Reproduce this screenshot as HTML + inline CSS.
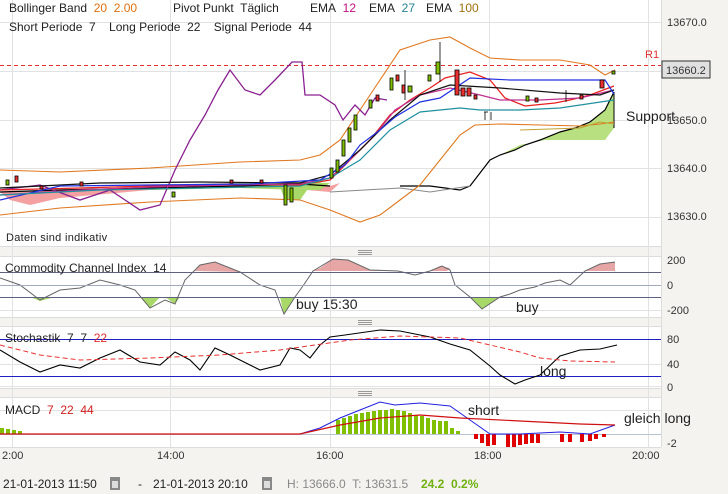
<!DOCTYPE html>
<html><head><meta charset="utf-8"><style>
body{margin:0;width:728px;height:494px;overflow:hidden;background:#f4f3ef;font-family:"Liberation Sans",sans-serif}
svg{position:absolute;left:0;top:0}
</style></head><body>
<svg width="728" height="494" viewBox="0 0 728 494" font-family="Liberation Sans, sans-serif">
<rect width="728" height="494" fill="#f4f3ef"/>
<!-- panels -->
<rect x="0" y="0" width="661" height="246" fill="#fff"/>
<rect x="0" y="256" width="661" height="61" fill="#fff"/>
<rect x="0" y="326" width="661" height="62" fill="#fff"/>
<rect x="0" y="397" width="661" height="50" fill="#fff"/>
<g stroke="#dcdcdc" stroke-width="1">
<line x1="0" y1="246.5" x2="661" y2="246.5"/><line x1="0" y1="256.5" x2="661" y2="256.5"/>
<line x1="0" y1="317.5" x2="661" y2="317.5"/><line x1="0" y1="326.5" x2="661" y2="326.5"/>
<line x1="0" y1="388.5" x2="661" y2="388.5"/><line x1="0" y1="397.5" x2="661" y2="397.5"/>
<line x1="0" y1="447.5" x2="661" y2="447.5"/>
<line x1="661.5" y1="0" x2="661.5" y2="447"/>
</g>
<!-- grips -->
<g stroke="#999" stroke-width="1">
<line x1="358" y1="250.5" x2="372" y2="250.5"/><line x1="358" y1="252.5" x2="372" y2="252.5"/><line x1="358" y1="254.5" x2="372" y2="254.5"/>
<line x1="358" y1="320.5" x2="372" y2="320.5"/><line x1="358" y1="322.5" x2="372" y2="322.5"/><line x1="358" y1="324.5" x2="372" y2="324.5"/>
<line x1="358" y1="391.5" x2="372" y2="391.5"/><line x1="358" y1="393.5" x2="372" y2="393.5"/><line x1="358" y1="395.5" x2="372" y2="395.5"/>
</g>
<!-- grids -->
<g stroke="#e2e2e2" stroke-width="1">
<line x1="0" y1="22.5" x2="661" y2="22.5"/><line x1="0" y1="71.5" x2="661" y2="71.5"/><line x1="0" y1="120.5" x2="661" y2="120.5"/><line x1="0" y1="168.5" x2="661" y2="168.5"/><line x1="0" y1="217.5" x2="661" y2="217.5"/>
<line x1="12.5" y1="0" x2="12.5" y2="447"/><line x1="170.5" y1="0" x2="170.5" y2="447"/><line x1="330.5" y1="0" x2="330.5" y2="447"/><line x1="489.5" y1="0" x2="489.5" y2="447"/><line x1="648.5" y1="0" x2="648.5" y2="447"/>
<line x1="0" y1="310.5" x2="661" y2="310.5"/><line x1="0" y1="364.5" x2="661" y2="364.5"/><line x1="0" y1="386.5" x2="661" y2="386.5"/><line x1="0" y1="410.5" x2="661" y2="410.5"/><line x1="0" y1="434.5" x2="661" y2="434.5" stroke="#b8c4d0"/>
</g>
<!-- R1 -->
<line x1="0" y1="65.5" x2="661" y2="65.5" stroke="#e03030" stroke-dasharray="4,3"/>
<text x="645" y="58" font-size="11" fill="#e03030">R1</text>
<!-- cloud areas -->
<path d="M0,192 L60,190 L150,188 L240,186 L300,184 L330,186 L340,183 L330,192 L260,186 L150,190 L60,198 L30,205 L10,200 Z" fill="#f4a0a0"/>
<path d="M150,185 L240,183 L300,182 L330,183 L320,190 L300,190 L240,188 L150,190 Z" fill="#a8d868"/>
<path d="M280,187 L300,188 L310,186 L300,200 L285,200 Z" fill="#a8d868"/>
<path d="M470,186 L490,160 L500,155 L515,150 L525,145 L540,140 L560,132 L575,128 L590,122 L605,110 L614,92 L614,128 L605,140 L545,140 L520,145 L490,160 Z" fill="#b8e080"/>
<path d="M0,192 L60,190 L150,188 L240,186 L300,184 L330,186 M400,186 L430,186 L460,190 L470,186 L490,160 L500,155 L515,150 L525,145 L540,140 L560,132 L575,128 L590,122 L605,110 L614,92" fill="none" stroke="#000" stroke-width="1.2"/>
<path d="M470,186 L430,192 L400,188 L330,192" fill="none" stroke="#888" stroke-width="1"/>
<line x1="614" y1="92" x2="614" y2="128" stroke="#000"/>
<!-- bollinger -->
<path d="M0,170 L60,172 L150,168 L240,162 L300,160 L320,155 L340,140 L360,110 L380,80 L400,50 L430,40 L450,37 L470,48 L490,58 L520,60 L560,60 L590,65 L605,75 L615,70" fill="none" stroke="#e07820" stroke-width="1.1"/>
<path d="M0,215 L60,208 L150,202 L240,198 L300,200 L330,210 L360,222 L380,215 L400,200 L420,185 L440,160 L460,135 L475,125 L500,124 L540,125 L580,126 L600,124 L614,122" fill="none" stroke="#e07820" stroke-width="1.1"/>
<path d="M520,130 L580,128 L600,122 L614,124" fill="none" stroke="#c0a030" stroke-width="1"/>
<!-- purple -->
<path d="M0,190 L40,185 L80,200 L110,190 L140,210 L160,205 L175,170 L190,140 L205,115 L218,90 L230,70 L245,90 L260,95 L275,80 L292,62 L302,62 L305,95 L320,95 L335,105 L343,120 L355,105 L365,115 L375,98 L387,100" fill="none" stroke="#8a2090" stroke-width="1.3"/>
<!-- ema lines -->
<path d="M0,190 L80,188 L150,186 L230,184 L300,185 L330,180 L350,160 L370,140 L390,115 L410,100 L430,88 L445,78 L470,72 L490,80 L505,98 L525,106 L555,103 L570,100 L590,95 L614,86" fill="none" stroke="#e82020" stroke-width="1.3"/>
<path d="M0,195 L80,190 L150,187 L230,185 L300,184 L330,178 L355,155 L375,135 L395,110 L420,95 L450,88 L480,95 L500,100 L540,100 L580,98 L614,90" fill="none" stroke="#c03090" stroke-width="1.2"/>
<path d="M0,188 L100,183 L200,182 L300,183 L330,175 L360,150 L390,120 L420,95 L450,85 L500,88 L560,93 L600,95 L614,90" fill="none" stroke="#111" stroke-width="1.2"/>
<path d="M0,200 L60,186 L150,185 L250,184 L320,180 L345,165 L360,145 L380,130 L395,117 L420,102 L440,98 L470,78 L510,80 L560,80 L605,80 L614,94" fill="none" stroke="#2030e0" stroke-width="1.2"/>
<path d="M0,195 L100,190 L200,188 L300,186 L330,178 L360,160 L390,130 L420,112 L460,108 L480,110 L520,110 L560,108 L614,100" fill="none" stroke="#2090a0" stroke-width="1.2"/>
<!-- candles -->
<g stroke="#000" stroke-width="0.8">
<rect x="330" y="168" width="3" height="10" fill="#80c000"/><rect x="336" y="160" width="3" height="12" fill="#80c000"/><rect x="342" y="140" width="3" height="16" fill="#80c000"/><rect x="348" y="128" width="3" height="14" fill="#80c000"/><rect x="354" y="115" width="3" height="15" fill="#80c000"/>
<rect x="369" y="100" width="3" height="8" fill="#80c000"/><rect x="376" y="95" width="3" height="6" fill="#e83030"/><rect x="390" y="78" width="3" height="12" fill="#80c000"/><rect x="396" y="75" width="3" height="6" fill="#e83030"/><rect x="402" y="85" width="3" height="8" fill="#e83030"/><rect x="408" y="86" width="4" height="6" fill="#80c000"/><rect x="428" y="75" width="3" height="6" fill="#80c000"/><rect x="436" y="62" width="4" height="12" fill="#80c000"/>
<rect x="455" y="70" width="4" height="25" fill="#e83030"/><rect x="461" y="88" width="4" height="8" fill="#e83030"/><rect x="467" y="88" width="4" height="8" fill="#e83030"/><rect x="474" y="95" width="3" height="4" fill="#e83030"/><rect x="526" y="96" width="3" height="5" fill="#80c000"/><rect x="535" y="98" width="3" height="4" fill="#e83030"/><rect x="580" y="95" width="3" height="4" fill="#e83030"/><rect x="600" y="80" width="4" height="8" fill="#e83030"/><rect x="612" y="71" width="3" height="3" fill="#80c000"/>
<rect x="6" y="180" width="3" height="5" fill="#80c000"/><rect x="15" y="176" width="3" height="6" fill="#e83030"/><rect x="40" y="186" width="3" height="3" fill="#e83030"/><rect x="80" y="182" width="3" height="4" fill="#e83030"/><rect x="172" y="192" width="3" height="5" fill="#80c000"/><rect x="230" y="180" width="3" height="3" fill="#e83030"/><rect x="260" y="180" width="3" height="3" fill="#e83030"/><rect x="284" y="185" width="3" height="20" fill="#80c000"/><rect x="290" y="188" width="3" height="14" fill="#80c000"/>
<line x1="440" y1="42" x2="440" y2="82"/><line x1="405" y1="70" x2="405" y2="100"/><line x1="485" y1="112" x2="485" y2="120"/><line x1="491" y1="112" x2="491" y2="120"/><line x1="484" y1="112" x2="488" y2="112"/><line x1="566" y1="90" x2="566" y2="102"/>
</g>
<text x="626" y="121" font-size="14" fill="#222">Support</text>
<text x="6" y="241" font-size="11" fill="#222" letter-spacing="0.3">Daten sind indikativ</text>
<!-- right axis -->
<rect x="662" y="61" width="48" height="17" fill="#e0e0e0" stroke="#333"/>
<g font-size="11" fill="#333">
<text x="667" y="26">13670.0</text><text x="666" y="74">13660.2</text><text x="667" y="124">13650.0</text><text x="667" y="172">13640.0</text><text x="667" y="220">13630.0</text>
<text x="667" y="264">200</text><text x="667" y="289">0</text><text x="667" y="314">-200</text>
<text x="667" y="343">80</text><text x="667" y="368">40</text><text x="667" y="391">0</text>
<text x="667" y="447">-2</text>
</g>
<!-- CCI -->
<path d="M195,271 L200,265 L215,262 L230,268 L240,272 Z" fill="#e09090" opacity="0.8"/>
<path d="M313,271 L320,268 L333,259 L348,260 L360,266 L370,270 L395,271 L398,271 Z" fill="#e09090" opacity="0.8"/>
<path d="M430,271 L440,266 L450,268 L447,271 Z" fill="#e09090" opacity="0.8"/>
<path d="M585,271 L600,264 L615,262 L615,271 Z" fill="#e09090" opacity="0.8"/>
<path d="M30,297 L40,301 L55,297 Z M140,297 L150,308 L160,297 Z M165,297 L175,304 L180,297 Z M280,297 L284,314 L295,297 Z M470,297 L482,309 L500,297 Z" fill="#a8d868"/>
<path d="M0,278 L20,285 L40,300 L60,290 L80,288 L100,280 L120,285 L135,290 L150,308 L165,300 L175,304 L185,280 L200,265 L215,262 L240,272 L260,285 L275,290 L284,314 L295,297 L305,283 L313,271 L333,259 L348,260 L370,270 L398,271 L415,275 L430,271 L442,266 L450,270 L455,285 L470,297 L482,309 L500,297 L510,294 L520,290 L535,287 L545,283 L560,280 L570,285 L585,271 L600,264 L615,262" fill="none" stroke="#666" stroke-width="1"/>
<line x1="0" y1="272.5" x2="661" y2="272.5" stroke="#606080"/><line x1="0" y1="285.5" x2="661" y2="285.5" stroke="#a0aab8"/><line x1="0" y1="297.5" x2="661" y2="297.5" stroke="#606080"/>
<text x="5" y="272" font-size="12" fill="#222">Commodity Channel Index&#160; 14</text>
<text x="296" y="309" font-size="14" fill="#222">buy 15:30</text>
<text x="516" y="312" font-size="14" fill="#222">buy</text>
<!-- Stoch -->
<line x1="0" y1="339.5" x2="661" y2="339.5" stroke="#2020c0"/><line x1="0" y1="376.5" x2="661" y2="376.5" stroke="#2020c0"/>
<path d="M0,350 L20,362 L40,372 L60,365 L80,368 L100,358 L120,350 L140,362 L160,365 L175,352 L190,360 L200,370 L215,348 L230,355 L260,370 L280,365 L290,348 L300,350 L310,358 L320,345 L330,337 L345,335 L380,330 L400,331 L430,337 L450,344 L470,350 L490,366 L500,375 L515,384 L525,380 L540,375 L560,356 L580,350 L600,349 L617,345" fill="none" stroke="#000" stroke-width="1.1"/>
<path d="M0,345 L40,355 L80,360 L150,358 L220,355 L280,350 L350,340 L400,336 L460,338 L490,345 L520,352 L540,358 L570,361 L615,362" fill="none" stroke="#e83030" stroke-dasharray="5,3"/>
<text x="5" y="342" font-size="12" fill="#222">Stochastik&#160; 7&#160; 7&#160; <tspan fill="#e03030">22</tspan></text>
<text x="540" y="376" font-size="14" fill="#222">long</text>
<!-- MACD -->
<g fill="#80c000">
<rect x="0" y="428" width="4" height="6"/><rect x="6" y="429" width="4" height="5"/><rect x="12" y="430" width="4" height="4"/><rect x="18" y="431" width="4" height="3"/>
<rect x="336" y="420" width="4" height="14"/><rect x="342" y="418" width="4" height="16"/><rect x="348" y="416" width="4" height="18"/><rect x="354" y="414" width="4" height="20"/><rect x="360" y="413" width="4" height="21"/><rect x="366" y="412" width="4" height="22"/><rect x="372" y="411" width="4" height="23"/><rect x="378" y="410" width="4" height="24"/><rect x="384" y="410" width="4" height="24"/><rect x="390" y="409" width="4" height="25"/><rect x="396" y="410" width="4" height="24"/><rect x="402" y="411" width="4" height="23"/><rect x="408" y="413" width="4" height="21"/><rect x="414" y="415" width="4" height="19"/><rect x="420" y="416" width="4" height="18"/><rect x="426" y="418" width="4" height="16"/><rect x="432" y="420" width="4" height="14"/><rect x="438" y="421" width="4" height="13"/><rect x="444" y="421" width="4" height="13"/><rect x="450" y="428" width="4" height="6"/><rect x="456" y="431" width="4" height="3"/>
</g>
<g fill="#e00000">
<rect x="474" y="434" width="4" height="5"/><rect x="480" y="434" width="4" height="9"/><rect x="486" y="434" width="4" height="12"/><rect x="492" y="434" width="4" height="11"/><rect x="506" y="434" width="4" height="13"/><rect x="512" y="434" width="4" height="13"/><rect x="518" y="434" width="4" height="11"/><rect x="524" y="434" width="4" height="10"/><rect x="530" y="434" width="4" height="9"/><rect x="536" y="434" width="4" height="9"/><rect x="560" y="434" width="4" height="8"/><rect x="568" y="434" width="4" height="8"/><rect x="580" y="434" width="4" height="8"/><rect x="588" y="434" width="4" height="7"/><rect x="594" y="434" width="4" height="5"/><rect x="602" y="434" width="4" height="3"/>
</g>
<path d="M0,434 L100,434 L200,434 L300,434 L320,428 L340,418 L360,410 L380,402 L395,405 L420,403 L440,405 L450,406 L470,420 L490,434 L520,434 L560,432 L590,434 L615,425" fill="none" stroke="#2020e0" stroke-width="1"/>
<path d="M0,434 L300,434 L340,425 L380,418 L420,415 L460,418 L520,421 L580,424 L615,425" fill="none" stroke="#d01010" stroke-width="1.2"/>
<text x="5" y="414" font-size="12" fill="#222">MACD&#160; <tspan fill="#d02020">7&#160; 22&#160; 44</tspan></text>
<text x="468" y="415" font-size="14" fill="#222">short</text>
<text x="624" y="423" font-size="14" fill="#222">gleich long</text>
<!-- top legend -->
<g font-size="12" fill="#222">
<text x="9" y="12">Bollinger Band&#160; <tspan fill="#e07010">20&#160; 2.00</tspan></text>
<text x="173" y="12">Pivot Punkt&#160; Täglich</text>
<text x="310" y="12">EMA&#160; <tspan fill="#c01080">12</tspan></text>
<text x="369" y="12">EMA&#160; <tspan fill="#208090">27</tspan></text>
<text x="426" y="12">EMA&#160; <tspan fill="#a07010">100</tspan></text>
<text x="9" y="31">Short Periode&#160; 7&#160;&#160;&#160; Long Periode&#160; 22&#160;&#160;&#160; Signal Periode&#160; 44</text>
</g>
<!-- time axis -->
<g font-size="11" fill="#333">
<text x="2" y="459">2:00</text><text x="157" y="459">14:00</text><text x="316" y="459">16:00</text><text x="474" y="459">18:00</text><text x="632" y="459">20:00</text>
</g>
<!-- footer -->
<g font-size="12">
<text x="3" y="488" fill="#222">21-01-2013 11:50</text>
<rect x="110" y="477" width="10" height="13" fill="#888"/><rect x="112" y="481" width="6" height="7" fill="#ddd"/>
<text x="138" y="488" fill="#222">-</text>
<text x="153" y="488" fill="#222">21-01-2013 20:10</text>
<rect x="262" y="477" width="10" height="13" fill="#888"/><rect x="264" y="481" width="6" height="7" fill="#ddd"/>
<text x="287" y="488" fill="#888">H: 13666.0&#160; T: 13631.5</text>
<text x="421" y="488" fill="#70b010" font-weight="bold">24.2&#160; 0.2%</text>
</g>
</svg>
</body></html>
